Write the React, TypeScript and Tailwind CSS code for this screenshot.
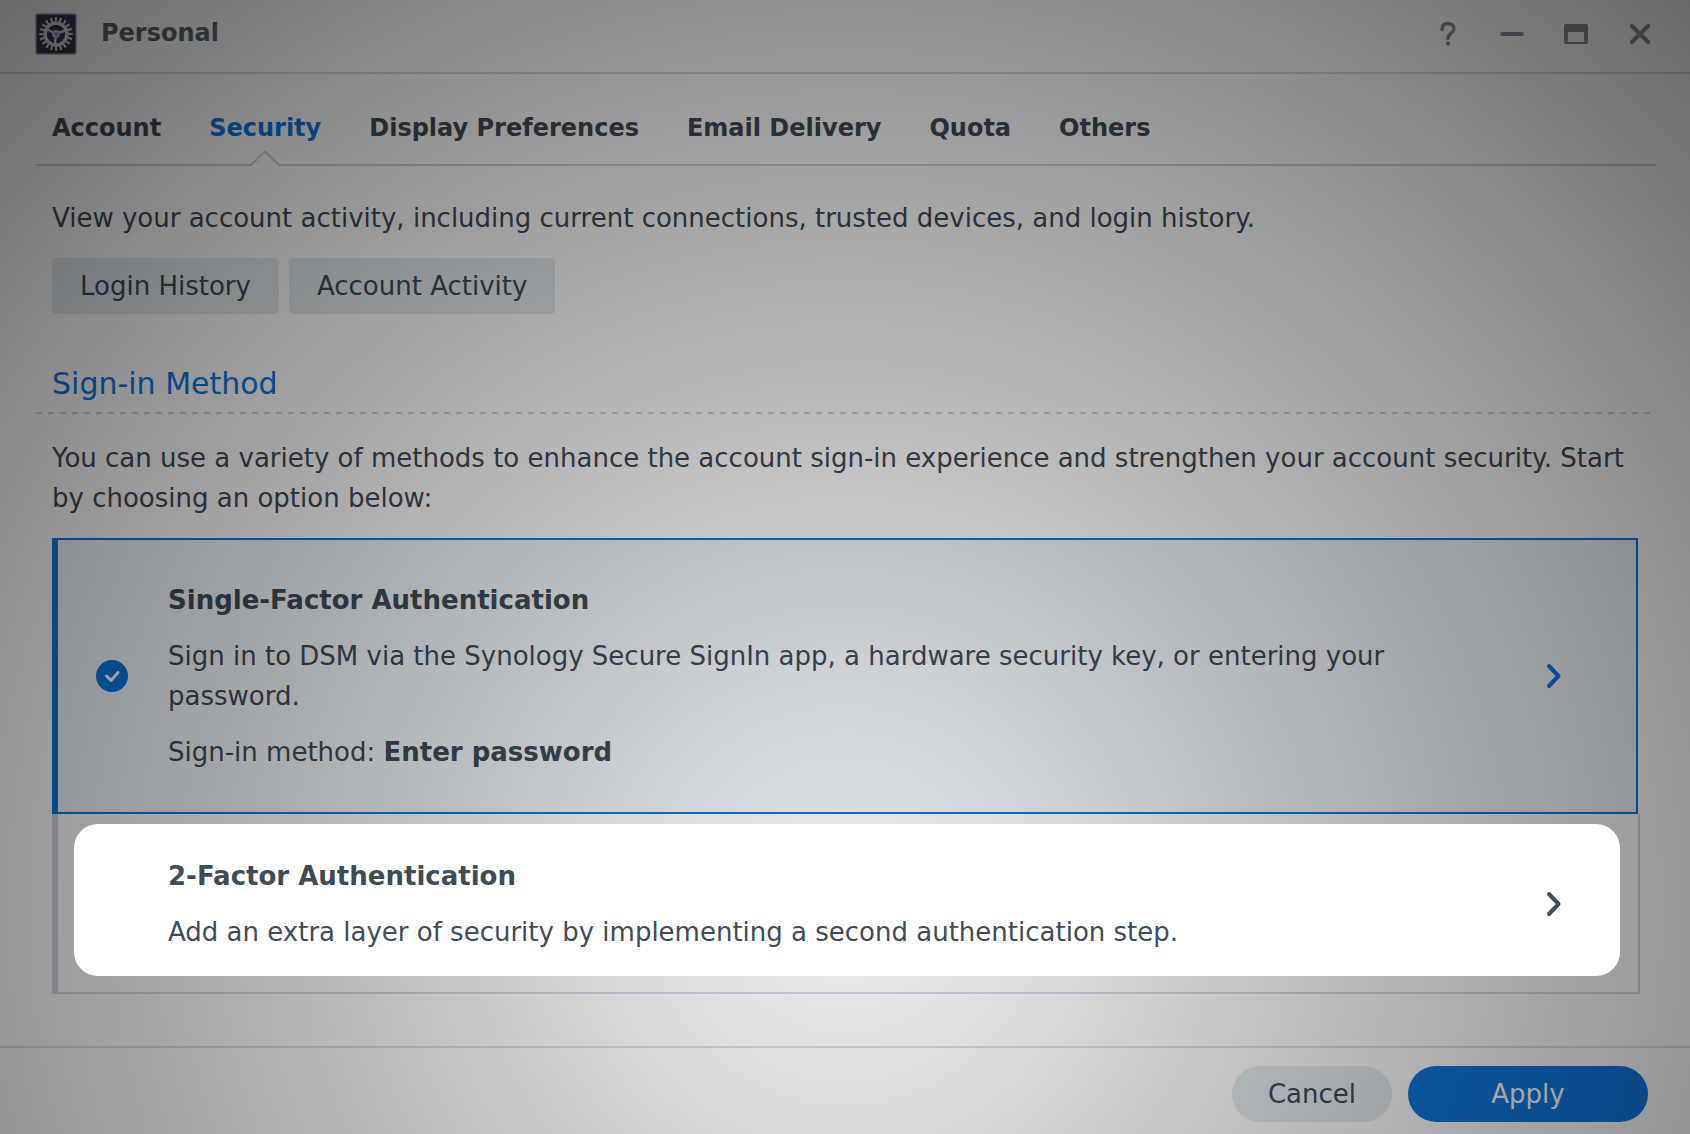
import { useState, type ReactNode } from 'react';
import clsx from 'clsx';

const TABS = ['Account', 'Security', 'Display Preferences', 'Email Delivery', 'Quota', 'Others'];

function GearIcon() {
  return (
    <svg viewBox="0 0 42 42" className="size-[42px]" aria-hidden="true">
      <rect x="1" y="1" width="40" height="40" rx="2" fill="#33374a" stroke="#9a9eae" strokeWidth="1.5" />
      <circle cx="21" cy="21" r="11" fill="none" stroke="#d4d6da" strokeWidth="3.5" />
      {/* teeth */}
      <circle
        cx="21"
        cy="21"
        r="14.5"
        fill="none"
        stroke="#d4d6da"
        strokeWidth="4.5"
        pathLength="40"
        strokeDasharray="0.9 1.1"
        strokeDashoffset="0.5"
      />
      <path d="M21 21 L12.5 16.5 M21 21 L30 17.5 M21 21 L20 31" stroke="#d4d6da" strokeWidth="2.5" />
      <circle cx="21" cy="21" r="4" fill="#b9bcc4" />
      <circle cx="21" cy="21" r="1.8" fill="#858992" />
    </svg>
  );
}

function Chevron() {
  return (
    <svg viewBox="0 0 16 26" className="h-[26px] w-4" fill="none" aria-hidden="true">
      <path d="M3 3 L12.5 13 L3 23" stroke="currentColor" strokeWidth="4" strokeLinecap="round" strokeLinejoin="round" />
    </svg>
  );
}

function CheckBadge() {
  return (
    <svg viewBox="0 0 32 32" className="size-8" fill="none" aria-label="Selected">
      <circle cx="16" cy="16" r="16" fill="#0d78e0" />
      <path d="M10.5 16 L15 20.5 L22 12.5" stroke="#fff" strokeWidth="3" strokeLinecap="round" strokeLinejoin="round" />
    </svg>
  );
}

function WindowButton({ label, children }: { label: string; children: ReactNode }) {
  return (
    <button type="button" aria-label={label} className="flex size-8 items-center justify-center text-[#858d95]">
      <svg viewBox="0 0 32 32" className="size-8" fill="none" stroke="currentColor" strokeWidth="4" strokeLinecap="round">
        {children}
      </svg>
    </button>
  );
}

export default function App() {
  const [tab, setTab] = useState('Security');

  return (
    <div className="relative isolate flex min-h-screen flex-col bg-white font-[Verdana,'DejaVu_Sans',sans-serif] text-[26px] leading-10 text-[#414b55]">
      <header className="flex h-[74px] items-center justify-between border-b-2 border-[#d6dade] pr-[34px] pb-1 pl-[35px]">
        <div className="flex items-center gap-6">
          <GearIcon />
          <h1 className="pb-0.5 text-2xl leading-8 font-bold text-[#5c656e]">Personal</h1>
        </div>
        <div className="flex items-center gap-8">
          <WindowButton label="Help">
            <path d="M10 11.5 C10 7 12.5 5.5 16 5.5 C19.5 5.5 22 7.5 22 11 C22 15 16 15.5 16 20.5" strokeWidth="3.5" />
            <circle cx="16" cy="25.5" r="2" fill="currentColor" stroke="none" />
          </WindowButton>
          <WindowButton label="Minimize">
            <path d="M6 16 H26" />
          </WindowButton>
          <WindowButton label="Maximize">
            <path d="M6 6 H26 Q28 6 28 8 V24 Q28 26 26 26 H6 Q4 26 4 24 V8 Q4 6 6 6 Z M8 14 V24 H24 V14 Z" fill="currentColor" fillRule="evenodd" stroke="none" />
          </WindowButton>
          <WindowButton label="Close">
            <path d="M8 8 L24 24 M24 8 L8 24" />
          </WindowButton>
        </div>
      </header>

      <main className="flex-1 pr-[34px] pl-9">
        <nav className="flex h-[92px] gap-12 border-b-2 border-[#d0d5da] px-4 pt-9">
          {TABS.map((name) => (
            <button
              key={name}
              type="button"
              onClick={() => setTab(name)}
              className={clsx(
                'relative h-14 pb-5 text-2xl leading-9 font-bold whitespace-nowrap',
                tab === name && 'text-[#0d78e0]'
              )}
            >
              {name}
              {tab === name && (
                <svg viewBox="0 0 32 16" className="absolute bottom-0 left-1/2 h-4 w-8 -translate-x-1/2" aria-hidden="true">
                  <path d="M2 16 L16 2 L30 16 Z" fill="#fff" />
                  <path d="M0 15 H2 L16 1.5 L30 15 H32" fill="none" stroke="#d0d5da" strokeWidth="2" />
                </svg>
              )}
            </button>
          ))}
        </nav>

        <section className="px-4 pt-8">
          <p>View your account activity, including current connections, trusted devices, and login history.</p>
          <div className="mt-5 flex gap-2.5">
            <button type="button" className="h-14 rounded-sm bg-[#e6ecf0] px-7">
              Login History
            </button>
            <button type="button" className="h-14 rounded-sm bg-[#e6ecf0] px-7">
              Account Activity
            </button>
          </div>
        </section>

        <h2 className="mt-[50px] px-4 pb-2 text-[30px] leading-10 text-[#0d78e0]">Sign-in Method</h2>
        <div className="h-0.5 bg-[repeating-linear-gradient(90deg,#d0d5da_0px,#d0d5da_6px,transparent_6px,transparent_12px)]" />

        <section className="px-4 pt-6 pb-[50px]">
          <p>
            You can use a variety of methods to enhance the account sign-in experience and strengthen your account
            security. Start by choosing an option below:
          </p>

          <ul className="mt-5">
            <li className="pr-0.5">
              <button
                type="button"
                className="flex w-full items-center border-2 border-l-[6px] border-[#0d78e0] bg-[#f2f6fa] py-10 pr-[74px] pl-[38px] text-left"
              >
                <CheckBadge />
                <span className="ml-10 flex flex-1 flex-col gap-4 pr-12">
                  <strong>Single-Factor Authentication</strong>
                  <span>
                    Sign in to DSM via the Synology Secure SignIn app, a hardware security key, or entering your
                    password.
                  </span>
                  <span>
                    Sign-in method: <strong>Enter password</strong>
                  </span>
                </span>
                <span className="text-[#0d78e0]">
                  <Chevron />
                </span>
              </button>
            </li>
            <li className="border-2 border-t-0 border-l-[6px] border-[#d3dae2] pt-2.5 pr-[18px] pb-4 pl-4">
              {/* stays above the dimming layer */}
              <button
                type="button"
                className="relative z-20 flex w-full items-center rounded-3xl bg-white pt-8 pr-[58px] pb-6 pl-[94px] text-left"
              >
                <span className="flex flex-1 flex-col gap-4">
                  <strong>2-Factor Authentication</strong>
                  <span>Add an extra layer of security by implementing a second authentication step.</span>
                </span>
                <Chevron />
              </button>
            </li>
          </ul>
        </section>
      </main>

      <footer className="flex justify-end gap-4 border-t-2 border-[#dcdfe3] px-[42px] pt-[18px] pb-3">
        <button type="button" className="h-14 w-40 rounded-full bg-[#e6ecf0]">
          Cancel
        </button>
        <button type="button" className="h-14 w-60 rounded-full bg-[#0d78e0] text-white">
          Apply
        </button>
      </footer>

      <div className="pointer-events-none absolute inset-0 z-10 bg-[radial-gradient(circle_at_50%_80%,rgba(0,0,0,0.07)_0%,rgba(0,0,0,0.1)_8%,rgba(0,0,0,0.15)_19%,rgba(0,0,0,0.21)_30%,rgba(0,0,0,0.3)_47%,rgba(0,0,0,0.42)_71%,rgba(0,0,0,0.59)_100%)]" />
    </div>
  );
}
